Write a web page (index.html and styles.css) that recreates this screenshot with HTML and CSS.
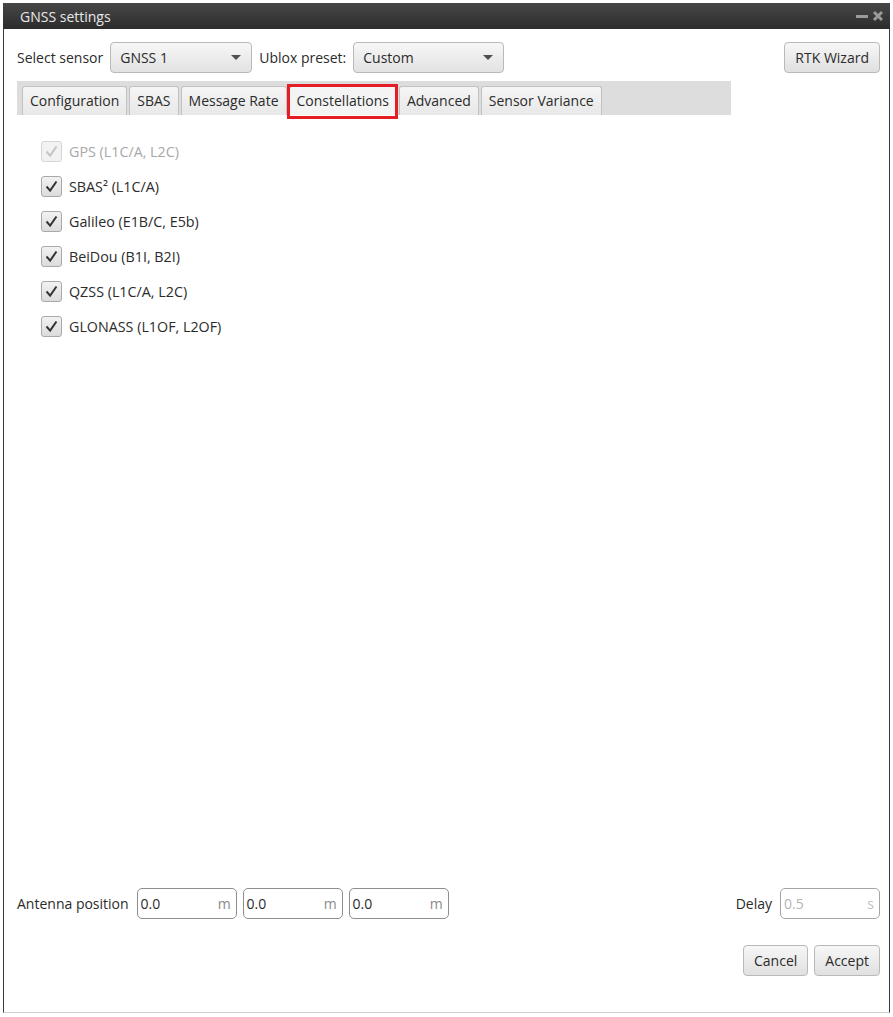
FILE: index.html
```html
<!DOCTYPE html>
<html>
<head>
<meta charset="utf-8">
<link rel="stylesheet" href="styles.css">
</head>
<body>
<div class="window">
  <div class="titlebar">
    <span class="title">GNSS settings</span>
    <span class="winctl">
      <svg width="14" height="12" viewBox="0 0 14 12"><rect x="1" y="5" width="12" height="3" fill="#9a9a9a"/></svg>
      <svg width="12" height="12" viewBox="0 0 12 12"><path d="M2 2 L10 10 M10 2 L2 10" stroke="#9a9a9a" stroke-width="3"/></svg>
    </span>
  </div>
  <div class="content">
    <div class="toprow">
      <span class="label">Select sensor</span>
      <div class="combo combo-sensor"><span>GNSS 1</span><i class="arrow"></i></div>
      <span class="label">Ublox preset:</span>
      <div class="combo combo-preset"><span>Custom</span><i class="arrow"></i></div>
      <div class="spacer"></div>
      <button class="btn">RTK Wizard</button>
    </div>
    <div class="tabbar">
      <div class="tab">Configuration</div>
      <div class="tab">SBAS</div>
      <div class="tab">Message Rate</div>
      <div class="tab selected">Constellations</div>
      <div class="tab">Advanced</div>
      <div class="tab">Sensor Variance</div>
    </div>
    <div class="checks">
      <label class="check disabled"><span class="box"><svg viewBox="0 0 21 21"><path d="M5 10.5 L9 15 L16 5" fill="none" stroke="#c4c4c4" stroke-width="2.2"/></svg></span>GPS (L1C/A, L2C)</label>
      <label class="check"><span class="box"><svg viewBox="0 0 21 21"><path d="M5 10.5 L9 15 L16 5" fill="none" stroke="#333" stroke-width="2.2"/></svg></span>SBAS² (L1C/A)</label>
      <label class="check"><span class="box"><svg viewBox="0 0 21 21"><path d="M5 10.5 L9 15 L16 5" fill="none" stroke="#333" stroke-width="2.2"/></svg></span>Galileo (E1B/C, E5b)</label>
      <label class="check"><span class="box"><svg viewBox="0 0 21 21"><path d="M5 10.5 L9 15 L16 5" fill="none" stroke="#333" stroke-width="2.2"/></svg></span>BeiDou (B1I, B2I)</label>
      <label class="check"><span class="box"><svg viewBox="0 0 21 21"><path d="M5 10.5 L9 15 L16 5" fill="none" stroke="#333" stroke-width="2.2"/></svg></span>QZSS (L1C/A, L2C)</label>
      <label class="check"><span class="box"><svg viewBox="0 0 21 21"><path d="M5 10.5 L9 15 L16 5" fill="none" stroke="#333" stroke-width="2.2"/></svg></span>GLONASS (L1OF, L2OF)</label>
    </div>
    <div class="fill"></div>
    <div class="antrow">
      <span class="label">Antenna position</span>
      <div class="field"><span>0.0</span><span class="unit">m</span></div>
      <div class="field"><span>0.0</span><span class="unit">m</span></div>
      <div class="field"><span>0.0</span><span class="unit">m</span></div>
      <div class="spacer"></div>
      <span class="label">Delay</span>
      <div class="field disabled"><span>0.5</span><span class="unit">s</span></div>
    </div>
    <div class="btnrow">
      <button class="btn">Cancel</button>
      <button class="btn">Accept</button>
    </div>
  </div>
</div>
</body>
</html>
```
FILE: styles.css
```css
html, body {
  margin: 0;
  padding: 0;
  background: #ffffff;
}
body {
  font-family: "Open Sans", "Noto Sans", "Liberation Sans", sans-serif;
  font-size: 14px;
  color: #2b2b2b;
  padding: 3px 3px 0 3px;
}
.window {
  width: 885px;
  height: 1009px;
  border: 1px solid #3a3a3a;
  border-top: none;
  border-bottom: 1px solid #cfcfcf;
  display: flex;
  flex-direction: column;
  background: #fff;
}
.titlebar {
  height: 26px;
  flex: none;
  background: linear-gradient(#474747, #2c2c2c);
  display: flex;
  align-items: center;
  padding: 0 6px 0 17px;
  margin: 0 -1px;
}
.title {
  color: #e8e8e8;
  font-size: 14px;
  flex: 1;
}
.winctl {
  display: flex;
  gap: 3px;
  align-items: center;
}
.content {
  flex: 1;
  display: flex;
  flex-direction: column;
  padding: 13px 9px 36px 13px;
}
.toprow {
  display: flex;
  align-items: center;
  height: 31px;
}
.label {
  white-space: nowrap;
}
.spacer { flex: 1; }
.combo {
  height: 29px;
  border: 1px solid #b9b9b9;
  border-radius: 4px;
  background: linear-gradient(#f7f7f7, #e2e2e2);
  display: flex;
  align-items: center;
  padding: 0 10px 0 9px;
  margin: 0 7px;
  box-sizing: content-box;
}
.combo span { flex: 1; }
.combo-sensor { width: 121px; }
.combo-preset { width: 130px; }
.arrow {
  width: 0; height: 0;
  border-left: 5px solid transparent;
  border-right: 5px solid transparent;
  border-top: 5px solid #505050;
}
.btn {
  font-family: inherit;
  font-size: 14px;
  color: #2b2b2b;
  height: 31px;
  border: 1px solid #b9b9b9;
  border-radius: 4px;
  background: linear-gradient(#f7f7f7, #e0e0e0);
  padding: 0 10px;
}
.tabbar {
  margin-top: 8px;
  width: 709px;
  height: 34px;
  background: #dddddd;
  display: flex;
  align-items: flex-end;
  gap: 2px;
  padding-left: 5px;
}
.tab {
  height: 28px;
  line-height: 28px;
  padding: 0 7px;
  border: 1px solid #c2c2c2;
  border-bottom: none;
  border-radius: 3px 3px 0 0;
  background: linear-gradient(#f5f5f5, #e8e8e8);
  white-space: nowrap;
}
.tab.selected {
  background: #f4f4f4;
  position: relative;
}
.tab.selected::after {
  content: "";
  position: absolute;
  left: -3px;
  right: -2px;
  top: -3px;
  bottom: -4px;
  border: 3px solid #e51d25;
}
.checks {
  display: flex;
  flex-direction: column;
  gap: 14px;
  padding: 26px 0 0 24px;
}
.check {
  display: flex;
  align-items: center;
  gap: 7px;
  height: 21px;
  font-size: 14.3px;
}
.check.disabled { color: #a8a8a8; }
.box {
  width: 19px;
  height: 19px;
  border: 1px solid #a9a9a9;
  border-radius: 3px;
  background: linear-gradient(#f2f2f2, #dcdcdc);
  display: block;
}
.check.disabled .box {
  border-color: #d6d6d6;
  background: #f2f2f2;
}
.box svg { width: 19px; height: 19px; display: block; }
.fill { flex: 1; }
.antrow {
  display: flex;
  align-items: center;
  height: 31px;
  gap: 6px;
}
.antrow .label { margin-right: 2px; }
.field {
  width: 90px;
  height: 29px;
  border: 1px solid #8e8e8e;
  border-radius: 5px;
  display: flex;
  align-items: center;
  padding: 0 5px 0 3px;
  background: #fff;
}
.field span:first-child { flex: 1; }
.unit { color: #8a8a8a; }
.field.disabled { border-color: #a5a5a5; color: #b5b5b5; }
.field.disabled .unit { color: #c2c2c2; }
.btnrow {
  margin-top: 26px;
  display: flex;
  justify-content: flex-end;
  gap: 6px;
}
```
